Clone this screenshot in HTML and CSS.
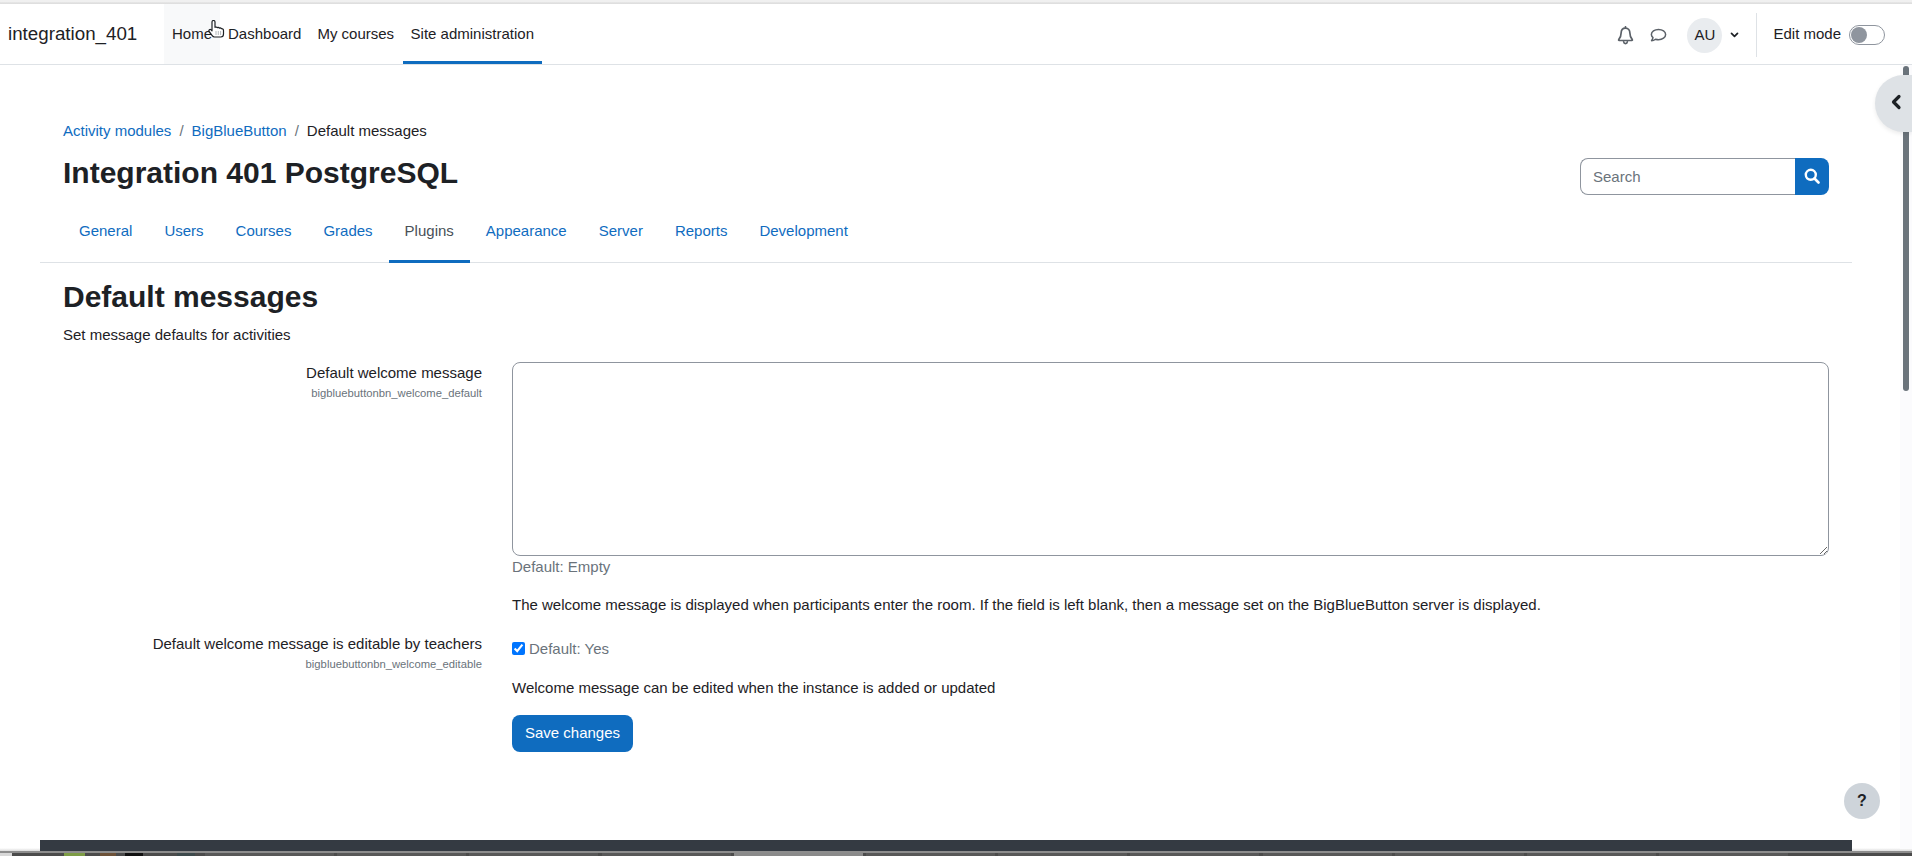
FILE: index.html
```html
<!DOCTYPE html>
<html lang="en">
<head>
<meta charset="utf-8">
<title>Default messages</title>
<link rel="stylesheet" href="styles.css">
</head>
<body>
<div class="window-edge"></div>
<header class="navbar">
  <a class="brand">integration_401</a>
  <nav class="primary-nav">
    <a class="nav-item hovered">Home</a>
    <a class="nav-item">Dashboard</a>
    <a class="nav-item">My courses</a>
    <a class="nav-item active">Site administration</a>
  </nav>
  <div class="nav-tools">
    <svg class="icon-bell" viewBox="0 0 18 20" width="17" height="19"><path d="M9 2.200c-3 0-4.600 2.300-4.600 5 0 4-1.200 5.600-2.600 7.200-.3.400 0 .9.400.9h13.600c.4 0 .7-.5.4-.9-1.400-1.600-2.600-3.200-2.600-7.200 0-2.700-1.600-5-4.600-5z" fill="none" stroke="#5b6168" stroke-width="1.800" stroke-linejoin="round"/><path d="M9 .8v1.400M7 16.600c.2 1.300 1 2 2 2s1.800-.7 2-2" fill="none" stroke="#5b6168" stroke-width="1.800" stroke-linecap="round"/></svg>
    <svg class="icon-chat" viewBox="0 0 18 16" width="17" height="15"><path d="M9 1.500c-4.200 0-7.600 2.400-7.600 5.400 0 1.300.7 2.500 1.700 3.400-.2 1.300-.9 2.400-1.500 3.300 1.600-.1 3.100-.8 4.200-1.600 1 .3 2.100.5 3.200.5 4.200 0 7.600-2.400 7.600-5.600S13.200 1.500 9 1.500z" fill="none" stroke="#5b6168" stroke-width="1.600" stroke-linejoin="round"/></svg>
    <span class="avatar">AU</span>
    <svg class="icon-caret" viewBox="0 0 10 7" width="9" height="6"><path d="M1.500 1.500 5 5l3.500-3.500" fill="none" stroke="#1d2125" stroke-width="2" stroke-linecap="round" stroke-linejoin="round"/></svg>
    <span class="nav-divider"></span>
    <span class="edit-label">Edit mode</span>
    <span class="switch"><span class="switch-knob"></span></span>
  </div>
</header>

<main class="page">
  <div class="page-head">
    <ol class="breadcrumb">
      <li><a>Activity modules</a></li>
      <li class="sep">/</li>
      <li><a>BigBlueButton</a></li>
      <li class="sep">/</li>
      <li>Default messages</li>
    </ol>
    <div class="title-row">
      <h1>Integration 401 PostgreSQL</h1>
      <form class="search">
        <input class="search-input" type="text" placeholder="Search">
        <button class="search-btn" type="button" aria-label="Search">
          <svg viewBox="0 0 16 16" width="16" height="16"><circle cx="6.800" cy="6.800" r="5" fill="none" stroke="#fff" stroke-width="2.400"/><path d="m10.500 10.500 4 4" stroke="#fff" stroke-width="2.600" stroke-linecap="round"/></svg>
        </button>
      </form>
    </div>
  </div>

  <nav class="tabs">
    <a class="tab">General</a>
    <a class="tab">Users</a>
    <a class="tab">Courses</a>
    <a class="tab">Grades</a>
    <a class="tab current">Plugins</a>
    <a class="tab">Appearance</a>
    <a class="tab">Server</a>
    <a class="tab">Reports</a>
    <a class="tab">Development</a>
  </nav>

  <section class="content">
    <h2>Default messages</h2>
    <p class="intro">Set message defaults for activities</p>

    <div class="setting setting-text">
      <div class="setting-label">
        <label>Default welcome message</label>
        <span class="setting-key">bigbluebuttonbn_welcome_default</span>
      </div>
      <div class="setting-field">
        <textarea class="message-box"></textarea>
        <div class="default-note">Default: Empty</div>
        <p class="setting-desc">The welcome message is displayed when participants enter the room. If the field is left blank, then a message set on the BigBlueButton server is displayed.</p>
      </div>
    </div>

    <div class="setting setting-check">
      <div class="setting-label">
        <label>Default welcome message is editable by teachers</label>
        <span class="setting-key">bigbluebuttonbn_welcome_editable</span>
      </div>
      <div class="setting-field">
        <div class="check-line">
          <input class="check" type="checkbox" checked>
          <span class="default-inline">Default: Yes</span>
        </div>
        <p class="setting-desc">Welcome message can be edited when the instance is added or updated</p>
      </div>
    </div>

    <div class="setting">
      <div></div>
      <div class="setting-field"><button class="save" type="button">Save changes</button></div>
    </div>
  </section>
</main>

<div class="footer-wrap"><div class="footer-bar"></div></div>
<div class="taskbar">
  <span class="task-start"></span>
  <span class="task-app green"></span>
  <span class="task-app brown"></span>
  <span class="task-app black"></span>
  <span class="task-app slate"></span>
  <span class="task-tab"></span>
  <span class="task-tab"></span>
  <span class="task-tab"></span>
  <span class="task-tab"></span>
  <span class="task-tab open"></span>
  <span class="task-tab"></span>
  <span class="task-tab"></span>
  <span class="task-tab"></span>
  <span class="task-tab"></span>
  <span class="task-tab"></span>
  <span class="task-tab"></span>
  <span class="task-tab"></span>
</div>

<div class="scroll-track"><div class="scroll-thumb"></div></div>
<button class="drawer-toggle" type="button" aria-label="Open drawer">
  <svg viewBox="0 0 12 16" width="12" height="16"><path d="M9 2.500 3.500 8 9 13.500" fill="none" stroke="#1d2125" stroke-width="3.200" stroke-linecap="round" stroke-linejoin="round"/></svg>
</button>
<button class="help" type="button">?</button>
<svg class="cursor" viewBox="0 0 17 18" width="17" height="18"><path d="M4 2c0-2 3-2 3 0v5.300c1.300-.4 2-.2 2.400.3.800-.3 1.600-.1 2 .5.800-.3 1.600-.1 2 .6 1-.2 2.100.4 2.100 1.800v3.500c0 1.600-1 3-2.600 3H6.500c-1 0-1.700-.5-2.300-1.400L1.100 11.400c-.8-1.300.9-2.600 2-1.500l.9.900z" fill="#fff" stroke="#1d2125" stroke-width="1.200" stroke-linejoin="round"/><path d="M8 11.500v3M10.300 11.500v3M12.600 11.500v3" stroke="#6a737b" stroke-width="1" stroke-dasharray="1 1"/></svg>
</body>
</html>
```

FILE: styles.css
```css
* { box-sizing: border-box; }

html, body { height: 100%; }

body {
  margin: 0;
  height: 856px;
  overflow: hidden;
  display: flex;
  flex-direction: column;
  position: relative;
  background: #fff;
  color: #1d2125;
  font-family: "Liberation Sans", Arial, sans-serif;
  font-size: 15px;
  line-height: 22.5px;
}

.window-edge {
  height: 4px;
  flex: none;
  background: linear-gradient(#f0f0f0, #f0f0f0 2px, #d9d9d9 3px, #e4e4e4);
}

/* top navigation */
.navbar {
  flex: none;
  height: 61px;
  display: flex;
  align-items: stretch;
  border-bottom: 1px solid #dee2e6;
  padding: 0 27px 0 8px;
}

.brand {
  font-size: 18.75px;
  line-height: 60px;
  width: 156px;
  flex: none;
}

.primary-nav { display: flex; align-items: stretch; }

.nav-item {
  padding: 0 8px;
  line-height: 59px;
  border-bottom: 3px solid transparent;
  height: 60px;
  white-space: nowrap;
}

.nav-item.hovered { background: #f8f9fa; }
.nav-item.active { border-bottom-color: #0f6cbf; margin-left: .5px; }

.nav-tools {
  margin-left: auto;
  display: flex;
  align-items: center;
  padding-top: 2px;
}

.icon-bell { margin-right: 16px; }
.icon-chat { margin-right: 20px; }

.avatar {
  width: 35px;
  height: 35px;
  border-radius: 50%;
  background: #e9ecef;
  display: flex;
  align-items: center;
  justify-content: center;
  font-size: 15px;
  margin-right: 8px;
}

.icon-caret { margin-right: 17px; }

.nav-divider {
  width: 1px;
  height: 44px;
  background: #dee2e6;
  margin-right: 16px;
}

.edit-label { margin-right: 8px; position: relative; top: -1px; }

.switch {
  width: 36px;
  height: 20px;
  border: 1px solid #8f959e;
  border-radius: 10px;
  background: #fff;
  padding: 1px;
  display: block;
}

.switch-knob {
  display: block;
  width: 16px;
  height: 16px;
  border-radius: 50%;
  background: #8f959e;
}

/* page */
.page {
  flex: 1;
  min-height: 0;
  padding: 55px 60px 0 40px;
}

.page-head { padding: 0 23px; }

.breadcrumb {
  list-style: none;
  margin: 0;
  padding: 0;
  display: flex;
  gap: 8px;
}

.breadcrumb a, .tab { color: #0f6cbf; }
.sep { color: #6a737b; }

.title-row {
  display: flex;
  align-items: flex-start;
  justify-content: space-between;
  margin-top: 12px;
  height: 53px;
}

h1, h2 {
  margin: 0;
  font-weight: 700;
  font-size: 30px;
  line-height: 36px;
}

.search { display: flex; margin-top: 3px; }

.search-input {
  width: 215px;
  height: 37.500px;
  border: 1px solid #8f959e;
  border-right: 0;
  border-radius: 8px 0 0 8px;
  padding: 0 12px;
  font: inherit;
  color: #1d2125;
}

.search-input::placeholder { color: #6a737b; opacity: 1; }

.search-btn {
  width: 34px;
  height: 37.500px;
  border: 0;
  padding: 0;
  background: #0f6cbf;
  border-radius: 0 8px 8px 0;
  display: flex;
  align-items: center;
  justify-content: center;
}

.tabs {
  display: flex;
  height: 55px;
  padding: 0 23px;
  border-bottom: 1px solid #dee2e6;
}

.tab {
  padding: 0 16px;
  line-height: 45px;
  height: 55px;
  border-bottom: 3px solid transparent;
  white-space: nowrap;
}

.tab.current { color: #495057; border-bottom-color: #0f6cbf; }

.content { padding: 16px 23px 0; }

.intro { margin: 9px 0 0; line-height: 22.500px; }

.setting {
  display: grid;
  grid-template-columns: 419px 1fr;
  column-gap: 30px;
}

.setting-text { margin-top: 16px; }
.setting-check { margin-top: 17px; }

.setting-label {
  text-align: right;
  display: flex;
  flex-direction: column;
  align-items: flex-end;
}

.setting-key {
  font-size: 11.250px;
  line-height: 16.500px;
  color: #6a737b;
  margin-top: 0;
}

.message-box {
  display: block;
  width: 100%;
  height: 194px;
  border: 1px solid #8f959e;
  border-radius: 8px;
  font: inherit;
  padding: 6px 12px;
  background: #fff;
}

.default-note, .default-inline { color: #6a737b; }

.default-inline { position: relative; top: 1px; }

.setting-desc { margin: 15px 0 0; }

.check-line {
  display: flex;
  align-items: center;
  padding-top: 4px;
  height: 26px;
}

.check {
  margin: 0 4px 0 0;
  width: 13px;
  height: 13px;
  accent-color: #0075ff;
}

.setting-check .setting-desc { margin-top: 18px; }

.save {
  margin-top: 15px;
  height: 37.500px;
  width: 121px;
  background: #0f6cbf;
  color: #fff;
  border: 0;
  border-radius: 8px;
  font: inherit;
}

/* bottom strip */
.footer-wrap {
  flex: none;
  height: 11px;
  background: linear-gradient(#fff, #fff 8px, #dcdcdc);
  padding: 0 60px 0 40px;
}

.footer-bar { height: 11px; background: #343a42; }

.taskbar {
  flex: none;
  height: 5px;
  background: #4b4b4b;
  border-top: 2px solid #8d8d8d;
  display: flex;
  align-items: stretch;
  overflow: hidden;
}

.task-start { width: 12px; background: #d8d8d8; margin-right: 52px; }
.task-app { width: 21px; margin-right: 15px; }
.task-app.green { background: #7d9c45; }
.task-app.brown { width: 16px; margin-right: 9px; background: #6d5238; }
.task-app.black { width: 18px; margin-right: 34px; background: #111; }
.task-app.slate { width: 18px; margin-right: 10px; background: #3d4a4c; }
.task-tab { width: 129px; margin-right: 3.200px; background: #585858; }
.task-tab.open { background: #8a8a8a; }

/* overlays */
.scroll-track {
  position: absolute;
  top: 65px;
  right: 0;
  bottom: 7px;
  width: 12px;
  background: #fbfbfd;
}

.scroll-thumb {
  position: absolute;
  top: 1px;
  left: 3px;
  width: 6px;
  height: 325px;
  border-radius: 3px;
  background: #6a737b;
}

.drawer-toggle {
  position: absolute;
  top: 75px;
  right: 0;
  width: 37px;
  height: 57px;
  border: 0;
  padding: 0 0 3px 4px;
  border-radius: 28.500px 0 0 28.500px;
  background: #dee2e6;
  box-shadow: 0 2px 4px rgba(0, 0, 0, .08);
  display: flex;
  align-items: center;
  justify-content: center;
}

.help {
  position: absolute;
  left: 1844px;
  top: 783px;
  width: 36px;
  height: 36px;
  border: 0;
  padding: 0;
  border-radius: 50%;
  background: #ced4da;
  color: #1d2125;
  font: 700 16px "Liberation Sans", Arial, sans-serif;
}

.cursor {
  position: absolute;
  left: 208px;
  top: 20px;
}
```
